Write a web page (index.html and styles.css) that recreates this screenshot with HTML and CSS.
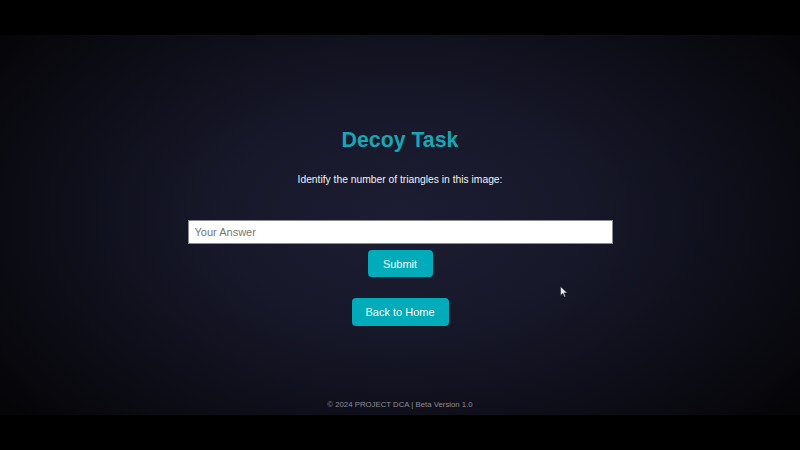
FILE: index.html
```html
<!DOCTYPE html>
<html>
<head>
<meta charset="utf-8">
<link rel="stylesheet" href="styles.css">
</head>
<body>
<div class="screen">
  <div class="stage">
    <main class="task">
      <h1 class="title">Decoy Task</h1>
      <p class="prompt">Identify the number of triangles in this image:</p>
      <input class="answer" type="text" placeholder="Your Answer">
      <button class="btn btn-submit">Submit</button>
      <button class="btn btn-home">Back to Home</button>
    </main>
    <footer class="footer">© 2024 PROJECT DCA | Beta Version 1.0</footer>
    <svg class="cursor" width="8" height="12" viewBox="0 0 8 12"><path d="M0.5 0.5 L0.5 9.5 L2.8 7.4 L4.3 11 L5.6 10.4 L4.2 6.9 L7.3 6.9 Z" fill="#e8e8f0" stroke="#222" stroke-width="0.6"/></svg>
  </div>
</div>
</body>
</html>
```
FILE: styles.css
```css
* { box-sizing: border-box; }
html, body { margin: 0; padding: 0; background: #000; }
body { font-family: "Liberation Sans", Arial, sans-serif; }
.screen {
  width: 800px;
  height: 450px;
  padding: 35px 0;
  background: #000;
}
.stage {
  position: relative;
  height: 380px;
  display: flex;
  flex-direction: column;
  align-items: center;
  background: radial-gradient(ellipse 62% 80% at 50% 48%, #1c1d31 0%, #17182a 35%, #0e0e19 70%, #050508 100%);
}
.task {
  display: flex;
  flex-direction: column;
  align-items: center;
  padding-top: 93px;
}
.title {
  margin: 0;
  font-size: 21.3px;
  line-height: 24px;
  font-weight: bold;
  color: #17a6b6;
}
.prompt {
  margin: 21px 0 0;
  font-size: 10.3px;
  line-height: 14px;
  color: #f2f2f5;
}
.answer {
  margin-top: 33px;
  width: 425px;
  height: 24px;
  padding: 0 6px;
  border: 1px solid #8a8a95;
  background: #fff;
  font-family: inherit;
  font-size: 11px;
  color: #333;
}
.answer::placeholder { color: #777; }
.btn {
  border: none;
  border-radius: 4px;
  background: #00acb9;
  color: #fff;
  font-family: inherit;
  font-size: 11px;
  padding: 0;
}
.btn-submit {
  margin-top: 6px;
  width: 65px;
  height: 27px;
}
.btn-home {
  margin-top: 21px;
  width: 97px;
  height: 28px;
}
.footer {
  margin-top: auto;
  padding-bottom: 4px;
  font-size: 7.8px;
  line-height: 12px;
  color: #8c8c96;
}
.cursor {
  position: absolute;
  left: 560px;
  top: 251px;
}
```
